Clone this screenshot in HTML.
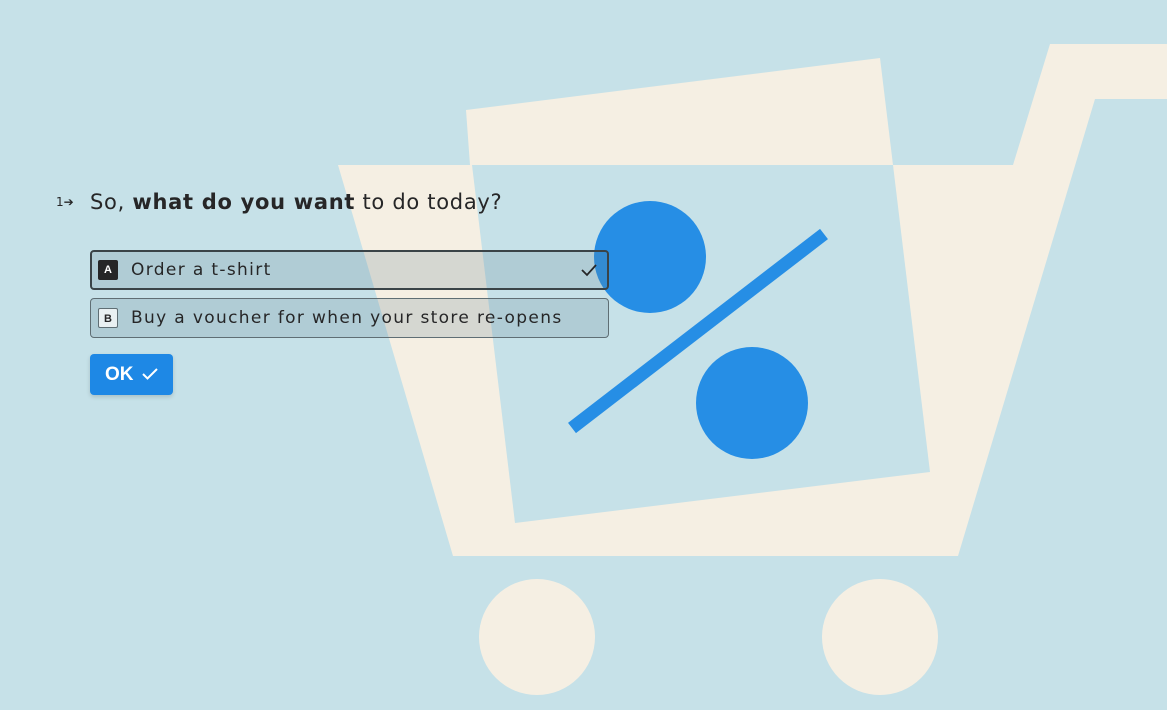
<!DOCTYPE html>
<html><head><style>
body{margin:0;width:1167px;height:710px;overflow:hidden;background:#c6e1e8;font-family:"DejaVu Sans","Liberation Sans",sans-serif;position:relative}
svg{position:absolute;left:0;top:0}
.q{position:absolute;left:90px;top:190px;font-size:21px;color:#262627;letter-spacing:0.7px}
.n{position:absolute;left:56px;top:195px;font-size:12px;color:#262627}
.opt{position:absolute;left:90px;width:515px;height:36px;border-radius:4px;background:rgba(100,130,145,0.22);box-sizing:border-box;font-size:17px;color:#262627;letter-spacing:1.35px}
.k{position:absolute;left:7px;top:9px;width:20px;height:20px;box-sizing:border-box;font-size:11px;font-weight:bold;text-align:center;line-height:20px;border-radius:2px;letter-spacing:0;font-family:"Liberation Sans",sans-serif}
.t{position:absolute;left:40px;top:8px}
.ok{position:absolute;left:90px;top:354px;width:83px;height:41px;background:#1e88e5;border-radius:4px;color:#fff;font-weight:bold;font-size:19px;box-shadow:0 2px 4px rgba(0,0,0,.15);font-family:"Liberation Sans",sans-serif}
</style></head><body>
<svg width="1167" height="710">
<polygon fill="#f5efe3" points="338,165 1013,165 1050,44 1167,44 1167,99 1095,99 958,556 453,556"/>
<polygon fill="#f5efe3" points="466,110 880,58 893,165 470,165"/>
<polygon fill="#c6e1e8" points="472,165 893,165 930,472 515,523"/>
<circle cx="537" cy="637" r="58" fill="#f5efe3"/>
<circle cx="880" cy="637" r="58" fill="#f5efe3"/>
<circle cx="650" cy="257" r="56" fill="#268ee5"/>
<circle cx="752" cy="403" r="56" fill="#268ee5"/>
<line x1="572" y1="428" x2="824" y2="234" stroke="#268ee5" stroke-width="13"/>
</svg>
<div class="n">1➔</div>
<div class="q">So, <b>what do you want</b> to do today?</div>
<div class="opt" style="top:250px;height:40px;width:519px;border:2px solid #3a4347">
<div class="k" style="left:6px;top:8px;background:#262627;color:#fff">A</div>
<div class="t" style="left:39px;top:8px">Order a t-shirt</div>
<svg width="18" height="14" style="left:488px;top:11px"><path d="M2 7 L7 12 L16 2" stroke="#262627" stroke-width="1.8" fill="none"/></svg>
</div>
<div class="opt" style="top:298px;height:40px;width:519px;border:1px solid #5f6e74">
<div class="k" style="background:#e9f0f2;border:1px solid #5f6e74;color:#262627">B</div>
<div class="t" style="top:9px">Buy a voucher for when your store re-opens</div>
</div>
<div class="ok"><span style="position:absolute;left:15px;top:10px">OK</span>
<svg width="18" height="14" style="left:51px;top:13px"><path d="M2 7 L6.5 11.5 L16 2" stroke="#fff" stroke-width="2" fill="none"/></svg></div>
</body></html>
